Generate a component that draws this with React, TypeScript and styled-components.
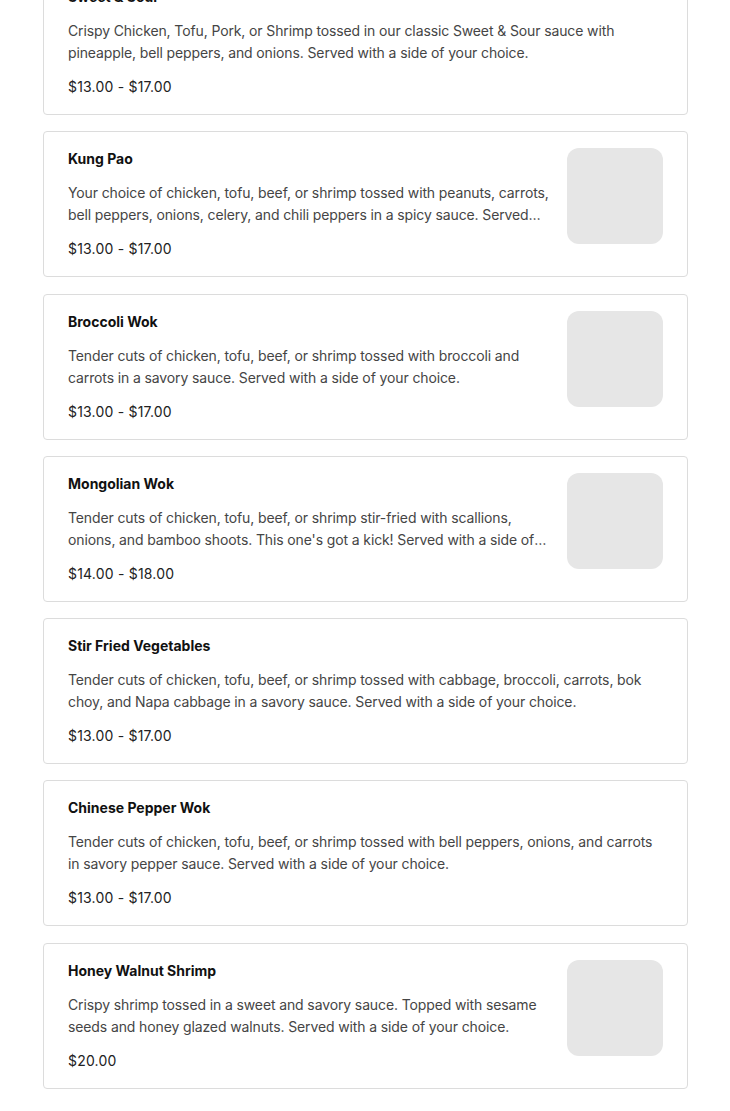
import React from 'react';
import styled, { createGlobalStyle } from 'styled-components';

const GlobalStyle = createGlobalStyle`
  html, body {
    margin: 0;
    padding: 0;
    background: #fff;
  }
  body {
    font-family: Inter, "Noto Sans", "Liberation Sans", sans-serif;
    -webkit-font-smoothing: antialiased;
  }
`;

const MenuList = styled.div`
  display: flex;
  flex-direction: column;
  gap: 16.3px;
  margin-top: -31px;
  padding: 0 42px 24px 43px;
`;

const Card = styled.div`
  display: flex;
  gap: 16px;
  align-items: flex-start;
  padding: 16px 24px;
  border: 1px solid #dcdcdc;
  border-radius: 4px;
  background: #fff;
`;

const Info = styled.div`
  flex: 1;
  min-width: 0;
  display: flex;
  flex-direction: column;
  gap: 12px;
`;

const Title = styled.div`
  font-size: 14px;
  font-weight: 700;
  line-height: 22px;
  color: #111;
`;

const Description = styled.div`
  font-size: 14px;
  line-height: 22px;
  letter-spacing: -0.12px;
  color: #454545;
  display: -webkit-box;
  -webkit-line-clamp: 2;
  -webkit-box-orient: vertical;
  overflow: hidden;
`;

const Price = styled.div`
  font-size: 14px;
  line-height: 22px;
  letter-spacing: 0.2px;
  color: #222;
`;

const Thumb = styled.div`
  flex: none;
  width: 96px;
  height: 96px;
  border-radius: 12px;
  background: #e6e6e6;
`;

type Item = {
  name: string;
  description: string;
  price: string;
  image?: boolean;
};

const items: Item[] = [
  {
    name: 'Sweet & Sour',
    description:
      'Crispy Chicken, Tofu, Pork, or Shrimp tossed in our classic Sweet & Sour sauce with pineapple, bell peppers, and onions. Served with a side of your choice.',
    price: '$13.00 - $17.00',
  },
  {
    name: 'Kung Pao',
    description:
      'Your choice of chicken, tofu, beef, or shrimp tossed with peanuts, carrots, bell peppers, onions, celery, and chili peppers in a spicy sauce. Served with a side of your choice.',
    price: '$13.00 - $17.00',
    image: true,
  },
  {
    name: 'Broccoli Wok',
    description:
      'Tender cuts of chicken, tofu, beef, or shrimp tossed with broccoli and carrots in a savory sauce. Served with a side of your choice.',
    price: '$13.00 - $17.00',
    image: true,
  },
  {
    name: 'Mongolian Wok',
    description:
      "Tender cuts of chicken, tofu, beef, or shrimp stir-fried with scallions, onions, and bamboo shoots. This one's got a kick! Served with a side of your choice.",
    price: '$14.00 - $18.00',
    image: true,
  },
  {
    name: 'Stir Fried Vegetables',
    description:
      'Tender cuts of chicken, tofu, beef, or shrimp tossed with cabbage, broccoli, carrots, bok choy, and Napa cabbage in a savory sauce. Served with a side of your choice.',
    price: '$13.00 - $17.00',
  },
  {
    name: 'Chinese Pepper Wok',
    description:
      'Tender cuts of chicken, tofu, beef, or shrimp tossed with bell peppers, onions, and carrots in savory pepper sauce. Served with a side of your choice.',
    price: '$13.00 - $17.00',
  },
  {
    name: 'Honey Walnut Shrimp',
    description:
      'Crispy shrimp tossed in a sweet and savory sauce. Topped with sesame seeds and honey glazed walnuts. Served with a side of your choice.',
    price: '$20.00',
    image: true,
  },
];

const MenuCard = ({ item }: { item: Item }) => (
  <Card>
    <Info>
      <Title>{item.name}</Title>
      <Description>{item.description}</Description>
      <Price>{item.price}</Price>
    </Info>
    {item.image && <Thumb />}
  </Card>
);

export default function App() {
  return (
    <>
      <GlobalStyle />
      <MenuList>
        {items.map((item) => (
          <MenuCard key={item.name} item={item} />
        ))}
      </MenuList>
    </>
  );
}
